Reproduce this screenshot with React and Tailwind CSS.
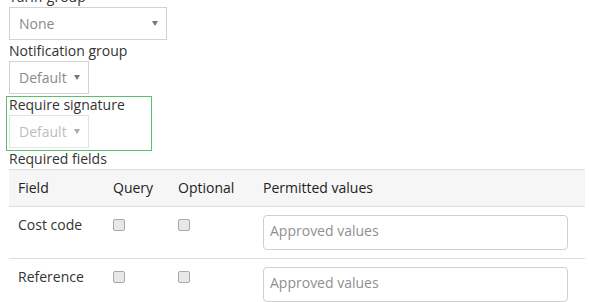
const fields = ["Cost code", "Reference"];

function Label({ children }) {
  return <div className="h-[21px] leading-[21px] text-[#333]">{children}</div>;
}

function Select({ value, width, disabled }) {
  return (
    <div
      className={`flex h-[33px] items-center justify-between border pl-[9px] pr-[8px] ${width} ${
        disabled ? "border-[#e2e2e2] text-[#bdbdbd]" : "border-[#d2d2d2] text-[#8a8a8a]"
      }`}
    >
      <span>{value}</span>
      <span
        className={`h-0 w-0 border-x-[3px] border-t-[5px] border-x-transparent ${
          disabled ? "border-t-[#aaa]" : "border-t-[#777]"
        }`}
      />
    </div>
  );
}

function Check() {
  return (
    <input
      type="checkbox"
      className="mt-[4px] block h-[12px] w-[12px] appearance-none rounded-[2px] border border-[#a8a8a8] bg-[#e8e8e8]"
    />
  );
}

export default function App() {
  return (
    <div className="min-h-screen bg-white pl-[9px] pr-[4px] font-['Open_Sans',sans-serif] text-[14px] text-[#333]">
      <div className="-mt-[14px]">
        <Label>Tariff group</Label>
        <Select value="None" width="w-[158px]" />

        <Label>Notification group</Label>
        <Select value="Default" width="w-[80px]" />

        <div className="relative">
          {/* highlight around the edited field */}
          <div className="pointer-events-none absolute left-[-3px] top-[2px] h-[55px] w-[146px] border border-[#5cbf6b]" />
          <Label>Require signature</Label>
          <Select value="Default" width="w-[80px]" disabled />
        </div>

        <Label>Required fields</Label>

        <table className="w-[576px] border-collapse">
          <thead>
            <tr className="border-y border-[#dedede] bg-[#f6f6f6] text-left text-[#222]">
              <th className="w-[95px] px-[9px] py-[8px] font-normal leading-[20px]">Field</th>
              <th className="w-[65px] px-[9px] py-[8px] font-normal leading-[20px]">Query</th>
              <th className="w-[85px] px-[9px] py-[8px] font-normal leading-[20px]">Optional</th>
              <th className="px-[9px] py-[8px] font-normal leading-[20px]">Permitted values</th>
            </tr>
          </thead>
          <tbody>
            {fields.map((f) => (
              <tr key={f} className="border-b border-[#dedede] align-top">
                <td className="px-[9px] pt-[8px] pb-[8px] leading-[20px]">{f}</td>
                <td className="px-[9px] pt-[8px]">
                  <Check />
                </td>
                <td className="px-[9px] pt-[8px]">
                  <Check />
                </td>
                <td className="pl-[9px] pt-[8px] pb-[8px]">
                  <input
                    placeholder="Approved values"
                    className="block h-[35px] w-[305px] rounded-[4px] border border-[#cfcfcf] px-[6px] pb-[4px] text-[#333] outline-none placeholder:text-[#8f8f8f]"
                  />
                </td>
              </tr>
            ))}
          </tbody>
        </table>
      </div>
    </div>
  );
}
